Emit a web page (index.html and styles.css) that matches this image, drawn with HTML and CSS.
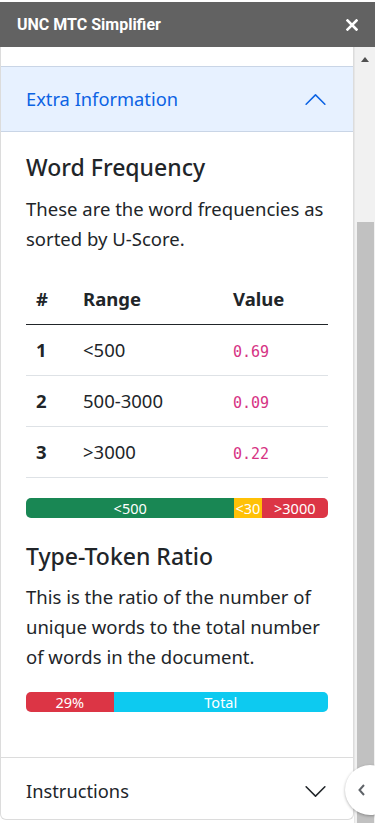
FILE: index.html
```html
<!DOCTYPE html>
<html lang="en">
<head>
<meta charset="utf-8">
<title>UNC MTC Simplifier</title>
<link rel="stylesheet" href="styles.css">
</head>
<body>
<div class="app">
  <header class="topbar">
    <span class="title">UNC MTC Simplifier</span>
    <svg class="close" width="12" height="12" viewBox="0 0 12 12" aria-hidden="true"><path d="M1.5 1.5 L10.5 10.5 M10.5 1.5 L1.5 10.5" stroke="#fff" stroke-width="2.6" stroke-linecap="square"/></svg>
  </header>
  <div class="main">
    <div class="pane">
      <div class="card">
        <div class="prev"></div>
        <div class="item">
          <div class="acc-btn open">
            <span>Extra Information</span>
            <svg class="chev up" width="25" height="25" viewBox="0 0 16 16" aria-hidden="true"><path fill="currentColor" fill-rule="evenodd" d="M1.646 4.646a.5.5 0 0 1 .708 0L8 10.293l5.646-5.647a.5.5 0 0 1 .708.708l-6 6a.5.5 0 0 1-.708 0l-6-6a.5.5 0 0 1 0-.708z"/></svg>
          </div>
          <div class="acc-body">
            <h4>Word Frequency</h4>
            <p>These are the word frequencies as sorted by U-Score.</p>
            <table class="tbl">
              <thead>
                <tr><th class="c1">#</th><th class="c2">Range</th><th class="c3">Value</th></tr>
              </thead>
              <tbody>
                <tr><th>1</th><td>&lt;500</td><td><code>0.69</code></td></tr>
                <tr><th>2</th><td>500-3000</td><td><code>0.09</code></td></tr>
                <tr><th>3</th><td>&gt;3000</td><td><code>0.22</code></td></tr>
              </tbody>
            </table>
            <div class="progress">
              <div class="bar green" style="width:69%">&lt;500</div>
              <div class="bar yellow" style="width:9%">&lt;30</div>
              <div class="bar red" style="width:22%">&gt;3000</div>
            </div>
            <h4>Type-Token Ratio</h4>
            <p>This is the ratio of the number of unique words to the total number of words in the document.</p>
            <div class="progress">
              <div class="bar red" style="width:29%">29%</div>
              <div class="bar cyan" style="width:71%">Total</div>
            </div>
          </div>
        </div>
        <div class="item">
          <div class="acc-btn closed">
            <span>Instructions</span>
            <svg class="chev" width="25" height="25" viewBox="0 0 16 16" aria-hidden="true"><path fill="currentColor" fill-rule="evenodd" d="M1.646 4.646a.5.5 0 0 1 .708 0L8 10.293l5.646-5.647a.5.5 0 0 1 .708.708l-6 6a.5.5 0 0 1-.708 0l-6-6a.5.5 0 0 1 0-.708z"/></svg>
          </div>
        </div>
      </div>
    </div>
    <div class="scrollbar">
      <div class="sb-arrow"></div>
      <div class="sb-thumb"></div>
    </div>
  </div>
  <div class="side-toggle">
    <svg width="10" height="14" viewBox="0 0 10 14" aria-hidden="true"><path d="M7 2 L2.5 7 L7 12" fill="none" stroke="#5f6368" stroke-width="2"/></svg>
  </div>
</div>
</body>
</html>
```

FILE: styles.css
```css
* { box-sizing: border-box; }
html, body {
  margin: 0;
  padding: 0;
  background: #fff;
}
body {
  width: 375px;
  height: 823px;
  overflow: hidden;
  font-family: "Noto Sans", "Open Sans", sans-serif;
  color: #212529;
}
.app {
  position: relative;
  width: 375px;
  height: 823px;
  padding-top: 2px;
  display: flex;
  flex-direction: column;
}
.topbar {
  height: 45px;
  flex: none;
  background: #626262;
  display: flex;
  align-items: center;
  justify-content: space-between;
  padding: 0 17px 0 17px;
}
.title {
  font-family: Roboto, "Liberation Sans", sans-serif;
  font-weight: 700;
  font-size: 16px;
  color: #fff;
}
.close { display: block; }
.main {
  flex: 1;
  display: flex;
  overflow: hidden;
}
.pane {
  width: 354px;
  flex: none;
}
.card {
  border: 1px solid #dcdcdc;
  border-top: none;
  border-radius: 0 0 6px 6px;
}
.prev { height: 19px; }
.item { border-top: 1px solid #c9d5e6; }
.item + .item { border-top-color: #dcdcdc; }
.acc-btn {
  display: flex;
  align-items: center;
  justify-content: space-between;
  padding: 17px 25px 18px 25px;
  font-size: 18.3px;
  line-height: 30px;
}
.acc-btn.open {
  background: #e7f1ff;
  color: #0c63e4;
  box-shadow: inset 0 -1px 0 #c9d5e6;
}
.acc-btn.closed {
  padding: 18px 25px 13px 25px;
  color: #212529;
}
.chev { display: block; color: #212529; }
.chev.up { transform: rotate(180deg); color: #0c63e4; }
.acc-body {
  padding: 22px 25px 20px 25px;
}
h4 {
  margin: 0 0 12px 0;
  font-size: 23px;
  font-weight: 500;
  line-height: 1.2;
}
p {
  margin: 0 0 20px 0;
  font-size: 18.5px;
  line-height: 30px;
}
.tbl {
  width: 100%;
  border-collapse: collapse;
  margin-bottom: 20px;
  font-size: 18.5px;
  line-height: 30px;
}
.tbl th, .tbl td {
  height: 50px;
  padding: 10px 10px;
  text-align: left;
  vertical-align: middle;
}
.tbl thead th {
  border-bottom: 1px solid #212529;
  font-weight: 700;
}
.tbl tbody tr { border-bottom: 1px solid #dee2e6; }
.tbl tbody th { font-weight: 700; }
.c1 { width: 47px; }
.c2 { width: 150px; }
code {
  font-family: "DejaVu Sans Mono", "Liberation Mono", monospace;
  font-size: 15px;
  line-height: 1;
  color: #d63384;
}
.progress {
  display: flex;
  height: 20px;
  border-radius: 5px;
  overflow: hidden;
  background: #e9ecef;
  margin-bottom: 25px;
  font-size: 14.5px;
  line-height: 20px;
}
.bar {
  color: #fff;
  text-align: center;
  white-space: nowrap;
  overflow: hidden;
}
.green { background: #198754; }
.yellow { background: #ffc107; text-align: left; padding-left: 1px; }
.red { background: #dc3545; }
.cyan { background: #0dcaf0; }
.scrollbar {
  flex: 1;
  background: #f1f1f1;
  border-left: 1px solid #e6e6e6;
  display: flex;
  flex-direction: column;
  align-items: center;
  padding-top: 10px;
}
.sb-arrow {
  width: 0;
  height: 0;
  border-left: 4.5px solid transparent;
  border-right: 4.5px solid transparent;
  border-bottom: 5px solid #505050;
}
.sb-thumb {
  width: 17px;
  margin-top: 160px;
  flex: 1;
  background: #c1c1c1;
}
.side-toggle {
  position: absolute;
  left: 345px;
  top: 765px;
  width: 50px;
  height: 50px;
  border-radius: 50%;
  background: #fff;
  box-shadow: 0 1px 3px rgba(0,0,0,0.3);
  display: flex;
  align-items: center;
  padding-left: 12px;
}
.side-toggle svg { display: block; }
```
